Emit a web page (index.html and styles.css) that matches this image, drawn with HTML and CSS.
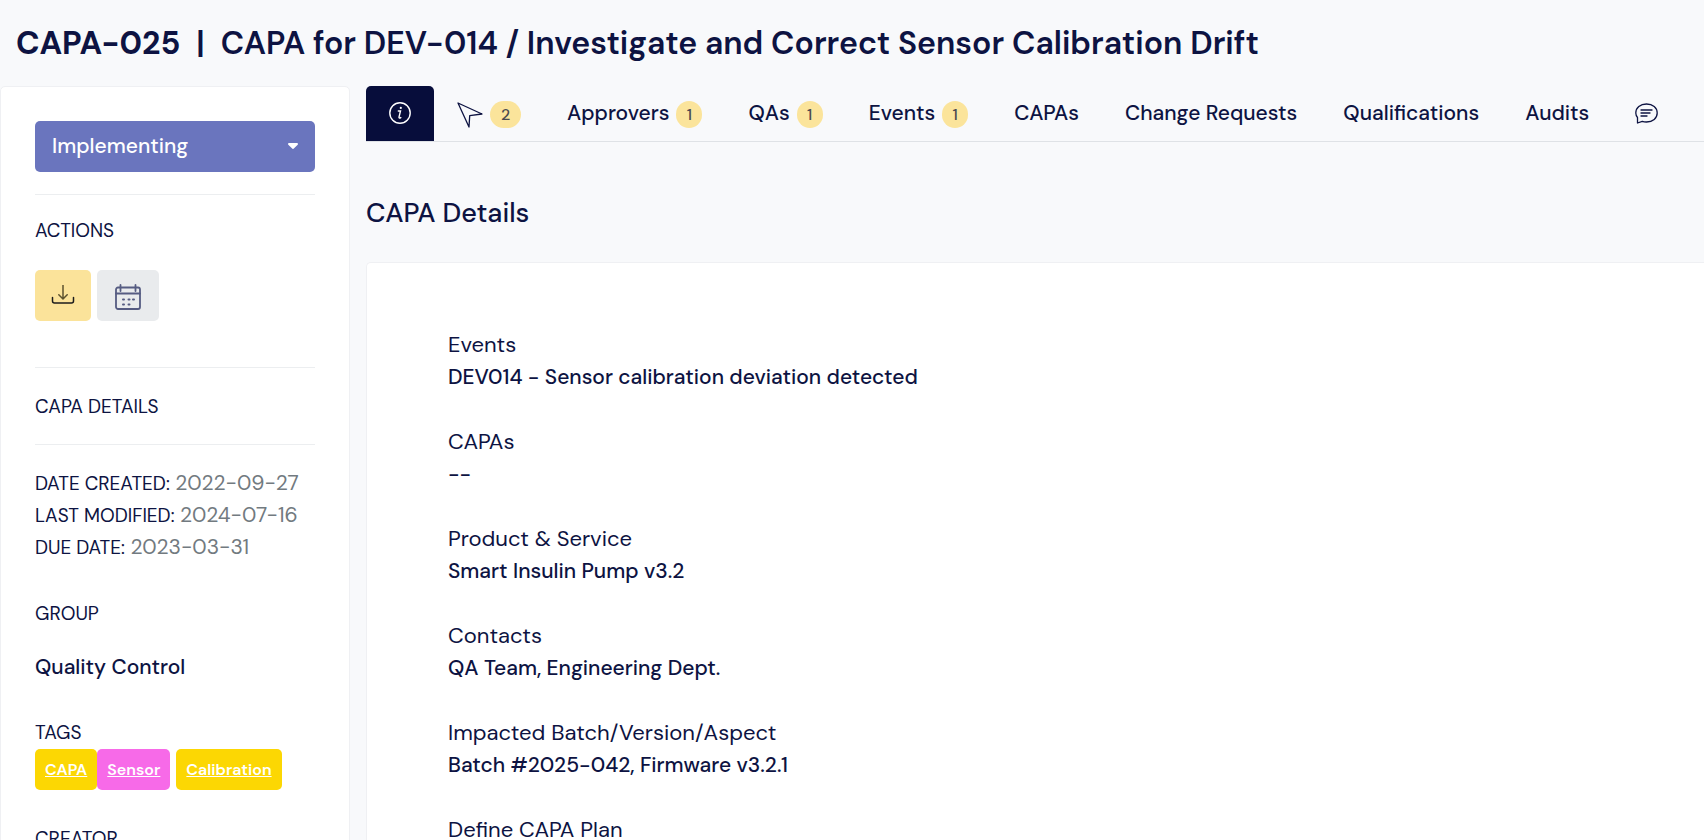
FILE: index.html
```html
<!DOCTYPE html>
<html lang="en">
<head>
  <meta charset="utf-8">
  <title>CAPA-025</title>
  <link rel="stylesheet" href="styles.css">
</head>
<body>
  <h1 class="page-title"><strong>CAPA-025</strong><span class="divider">|</span><span>CAPA for DEV-014 / Investigate and Correct Sensor Calibration Drift</span></h1>
  <div class="layout">
    <aside class="sidebar">
      <div class="status">
        <select class="status-select" aria-label="Status">
          <option>Implementing</option>
        </select>
        <svg class="status-caret" width="10" height="6" viewBox="0 0 10 6" aria-hidden="true"><path d="M1 0h8a1 1 0 0 1 .7 1.7L5.8 5.6a1.1 1.1 0 0 1-1.6 0L.3 1.7A1 1 0 0 1 1 0z" fill="currentColor"/></svg>
      </div>
      <section class="actions">
        <h2 class="side-heading">ACTIONS</h2>
        <div class="action-row">
          <button class="action action-download" type="button" aria-label="Download">
            <svg width="24" height="22" viewBox="0 0 24 22" fill="none" stroke="currentColor" stroke-width="1.5" stroke-linecap="round" stroke-linejoin="round"><path d="M12 0v13.500M7.800 9.800 12 14l4.200-4.200" stroke="#5d532f"/><path d="M1.500 12.500v3.500a2 2 0 0 0 2 2h17a2 2 0 0 0 2-2v-3.500"/></svg>
          </button>
          <button class="action action-calendar" type="button" aria-label="Schedule">
            <svg width="26" height="26" viewBox="0 0 26 26" fill="none" stroke="currentColor" stroke-width="1.800" stroke-linecap="round"><rect x="1" y="3.500" width="24" height="21.500" rx="2"/><path d="M1 9.500h24M5.500 1v6M20.500 1v6"/><path d="M8 15.500h1M13.500 15.500h1M18 15.500h1M8 20.500h1M13.500 20.500h1" stroke-width="2"/></svg>
          </button>
        </div>
      </section>
      <h2 class="side-heading details-heading">CAPA DETAILS</h2>
      <dl class="dates">
        <div><dt>DATE CREATED:</dt> <dd>2022-09-27</dd></div>
        <div><dt>LAST MODIFIED:</dt> <dd>2024-07-16</dd></div>
        <div><dt>DUE DATE:</dt> <dd>2023-03-31</dd></div>
      </dl>
      <h2 class="side-heading">GROUP</h2>
      <p class="group-name">Quality Control</p>
      <h2 class="side-heading">TAGS</h2>
      <div class="tags">
        <a class="tag" href="#capa">CAPA</a>
        <a class="tag tag-pink" href="#sensor">Sensor</a>
        <a class="tag" href="#calibration">Calibration</a>
      </div>
      <h2 class="side-heading">CREATOR</h2>
    </aside>
    <main class="main">
      <nav class="tabs" aria-label="Record sections">
        <a class="tab tab-active" href="#info" aria-label="Information" aria-current="page">
          <svg width="22" height="22" viewBox="0 0 22 22" fill="none" stroke="currentColor" stroke-width="1.400"><circle cx="11" cy="11" r="10.200"/><path d="M9.300 9h2.200l-1.500 6.200c-.2.900.6 1.100 1.800.4" stroke-linecap="round"/><circle cx="11.800" cy="5.900" r="1.100" fill="currentColor" stroke="none"/></svg>
        </a>
        <a class="tab" href="#workflow" aria-label="Workflow, 2">
          <svg class="cursor-icon" width="26" height="26" viewBox="0 0 26 26" fill="none" stroke="currentColor" stroke-width="1.300" stroke-linejoin="round"><path d="M1 1l24 11-12.300 1.700L12 25z"/></svg>
          <span class="badge">2</span>
        </a>
        <a class="tab" href="#approvers">Approvers <span class="badge badge-one">1</span></a>
        <a class="tab" href="#qas">QAs <span class="badge badge-one">1</span></a>
        <a class="tab" href="#events">Events <span class="badge badge-one">1</span></a>
        <a class="tab" href="#capas">CAPAs</a>
        <a class="tab" href="#changes">Change Requests</a>
        <a class="tab" href="#qualifications">Qualifications</a>
        <a class="tab" href="#audits">Audits</a>
        <a class="tab" href="#comments" aria-label="Comments">
          <svg width="23" height="21" viewBox="0 0 23 21" fill="none" stroke="currentColor" stroke-width="1.300" stroke-linecap="round" stroke-linejoin="round"><path d="M2.500 20v-5.500C1.300 13 .8 11.500.8 10 .8 4.900 5.200 1 11.500 1s10.700 3.900 10.700 9-4.400 9-10.700 9c-1.500 0-3-.2-4.200-.7z M6 7h11M6 10h9M6 13h6"/></svg>
        </a>
      </nav>
      <h2 class="section-title">CAPA Details</h2>
      <dl class="card">
        <div class="field"><dt>Events</dt><dd>DEV014 - Sensor calibration deviation detected</dd></div>
        <div class="field"><dt>CAPAs</dt><dd>--</dd></div>
        <div class="field"><dt>Product &amp; Service</dt><dd>Smart Insulin Pump v3.2</dd></div>
        <div class="field"><dt>Contacts</dt><dd>QA Team, Engineering Dept.</dd></div>
        <div class="field"><dt>Impacted Batch/Version/Aspect</dt><dd>Batch #2025-042, Firmware v3.2.1</dd></div>
        <div class="field"><dt>Define CAPA Plan</dt></div>
      </dl>
    </main>
  </div>
</body>
</html>
```
FILE: styles.css
```css
* { box-sizing: border-box; }

body {
  margin: 0;
  height: 100vh;
  overflow: hidden;
  background: #f8f9fb;
  color: #0d1342;
  font: 21px/32px "DM Sans", Inter, "Open Sans", sans-serif;
}

h1, h2, p, dl, dd { margin: 0; }
svg { display: block; flex: none; }
a { color: inherit; }

.page-title {
  padding: 23px 16px;
  font-size: 32px;
  line-height: 40px;
  font-weight: 600;
  white-space: nowrap;
}
.page-title strong { font-weight: 700; }
.divider { margin: 0 16px; }

.layout { display: flex; align-items: flex-start; gap: 16px; }

.sidebar {
  flex: none;
  width: 350px;
  min-height: 100vh;
  padding: 34px 34px 0;
  background: #fff;
  border: 1px solid #eff0f3;
  border-radius: 5px;
}

.status {
  position: relative;
  padding-bottom: 22px;
  border-bottom: 1px solid #eceef0;
}
.status-select {
  display: block;
  width: 100%;
  height: 51px;
  padding: 0 17px 1px;
  border: 0;
  border-radius: 5px;
  appearance: none;
  background: #6a75be;
  color: #fff;
  font: inherit;
  font-weight: 500;
}
.status-caret { position: absolute; top: 22px; right: 17px; color: #fff; }

.side-heading { font-size: 19px; font-weight: 400; }

.actions {
  padding: 20px 0 46px;
  border-bottom: 1px solid #eceef0;
}
.action-row { display: flex; gap: 6px; margin-top: 23px; }
.action {
  display: flex;
  align-items: center;
  justify-content: center;
  width: 62px;
  height: 51px;
  padding: 0;
  border: 0;
  border-radius: 5px;
  background: #e9ebed;
  color: #565c82;
}
.action-download { width: 56px; background: #fbe39a; color: #1c1c1c; }
.action-calendar { padding-top: 3px; }

.details-heading { padding: 23px 0 21px; border-bottom: 1px solid #eceef0; }

.dates { padding: 22px 0 35px; }
.dates dt, .dates dd { display: inline; }
.dates dt { font-size: 19px; line-height: 20px; }
.dates dd { color: #727a80; }

.group-name { padding: 21px 0 34px; font-weight: 500; }

.tags { display: flex; margin-bottom: 33px; }
.tag {
  padding: 0 10px;
  border-radius: 5px;
  background: #fcd703;
  color: #fff;
  font-size: 16px;
  line-height: 41px;
  font-weight: 600;
}
.tag-pink { margin-right: 6px; background: #f76ae8; }

.main { flex: 1; min-width: 0; }

.tabs { display: flex; height: 56px; border-bottom: 1px solid #dfe2e6; }
.tab {
  display: flex;
  align-items: center;
  gap: 7px;
  padding: 0 23px 1px;
  font-weight: 500;
  text-decoration: none;
  white-space: nowrap;
}
.tab-active { border-radius: 5px 5px 0 0; background: #070d3b; color: #fff; }
.cursor-icon { margin-top: 4px; }
.badge {
  width: 31px;
  margin-top: 3px;
  border-radius: 14px;
  background: #fbe49b;
  color: #4b4a50;
  font-size: 16px;
  line-height: 27px;
  text-align: center;
}
.badge-one { width: 26px; }

.section-title {
  padding: 54px 0 32px;
  font-size: 27px;
  line-height: 34px;
  font-weight: 500;
}

.card {
  display: grid;
  gap: 33px;
  min-height: 100vh;
  align-content: start;
  padding: 66px 81px;
  background: #fff;
  border: 1px solid #eff0f3;
  border-right: 0;
  border-radius: 5px 0 0 0;
}
.field dt { font-size: 22px; }
.field dd { font-weight: 500; }
```
